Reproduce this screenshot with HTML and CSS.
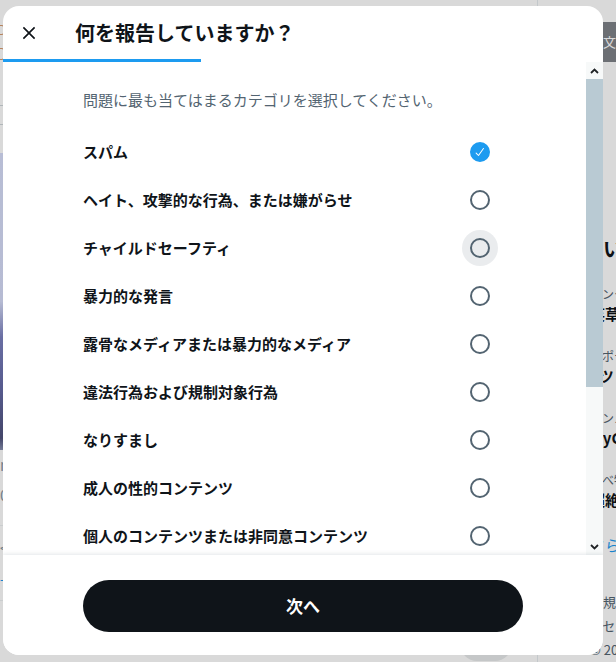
FILE: index.html
```html
<!DOCTYPE html>
<html lang="ja">
<head>
<meta charset="utf-8">
<title>報告</title>
<link rel="stylesheet" href="styles.css">
</head>
<body>
<div class="page">
  <main class="main">
    <div class="m-icon first"></div>
    <div class="m-icon second"></div>
    <div class="m-rule r1"></div>
    <div class="m-rule r2"></div>
    <div class="m-media"></div>
    <div class="m-text t1 muted">m</div>
    <div class="m-text t2 muted">0</div>
    <div class="m-rule r3"></div>
    <div class="m-text t3 muted">&lt;</div>
    <div class="m-text t4 blue">+</div>
    <div class="m-rule r4"></div>
    <div class="m-pill"></div>
  </main>
  <aside class="side">
    <div class="s-tip">の文字</div>
    <div class="s-rule"></div>
    <div class="s-head">いま</div>
    <div class="s-trend first"><div class="s-label">エンタ</div><div class="s-title">笑草弱</div></div>
    <div class="s-trend"><div class="s-label">スポー</div><div class="s-title">#ツ</div></div>
    <div class="s-trend"><div class="s-label">インノ</div><div class="s-title">MyG</div></div>
    <div class="s-trend"><div class="s-label">食べ物</div><div class="s-title">超絶対</div></div>
    <div class="s-more">さら</div>
    <div class="s-rule2"></div>
    <div class="s-foot">
      <div>利用規</div>
      <div>アクセ</div>
      <div class="copy">© 2026</div>
    </div>
  </aside>
</div>
<div class="mask"></div>
<div class="modal" role="dialog" aria-labelledby="report-title">
  <header class="modal-head">
    <button class="close" aria-label="閉じる">
      <svg viewBox="0 0 24 24"><path d="M10.59 12L4.54 5.96l1.42-1.42L12 10.59l6.04-6.05 1.42 1.42L13.41 12l6.05 6.04-1.42 1.42L12 13.41l-6.04 6.05-1.42-1.42L10.59 12z"/></svg>
    </button>
    <h1 class="title" id="report-title">何を報告していますか？</h1>
  </header>
  <div class="progress"><div class="progress-fill" style="width:33%"></div></div>
  <div class="scroll-area">
    <div class="body">
      <p class="lead">問題に最も当てはまるカテゴリを選択してください。</p>
      <ul class="options">
        <li class="option"><span class="label">スパム</span><span class="radio checked"><span class="dot"><svg viewBox="0 0 24 24"><path d="M9 20c-.264 0-.52-.104-.707-.293l-4.785-4.785c-.39-.39-.39-1.023 0-1.414s1.023-.39 1.414 0l3.946 3.945L18.075 4.41c.32-.45.94-.558 1.395-.24.45.318.56.942.24 1.394L9.817 19.577c-.17.24-.438.395-.732.42-.028.002-.057.003-.085.003z"/></svg></span></span></li>
        <li class="option"><span class="label">ヘイト、攻撃的な行為、または嫌がらせ</span><span class="radio"><span class="dot"></span></span></li>
        <li class="option"><span class="label">チャイルドセーフティ</span><span class="radio hover"><span class="dot"></span></span></li>
        <li class="option"><span class="label">暴力的な発言</span><span class="radio"><span class="dot"></span></span></li>
        <li class="option"><span class="label">露骨なメディアまたは暴力的なメディア</span><span class="radio"><span class="dot"></span></span></li>
        <li class="option"><span class="label">違法行為および規制対象行為</span><span class="radio"><span class="dot"></span></span></li>
        <li class="option"><span class="label">なりすまし</span><span class="radio"><span class="dot"></span></span></li>
        <li class="option"><span class="label">成人の性的コンテンツ</span><span class="radio"><span class="dot"></span></span></li>
        <li class="option"><span class="label">個人のコンテンツまたは非同意コンテンツ</span><span class="radio"><span class="dot"></span></span></li>
        <li class="option"><span class="label">自殺または自傷行為</span><span class="radio"><span class="dot"></span></span></li>
        <li class="option"><span class="label">詐欺および不正行為</span><span class="radio"><span class="dot"></span></span></li>
        <li class="option"><span class="label">誤解を招く情報</span><span class="radio"><span class="dot"></span></span></li>
        <li class="option"><span class="label">その他</span><span class="radio"><span class="dot"></span></span></li>
      </ul>
    </div>
    <div class="scrollbar" aria-hidden="true">
      <div class="sb-btn"><svg viewBox="0 0 9 6"><path d="M1 5 4.5 1.5 8 5"/></svg></div>
      <div class="sb-thumb"></div>
      <div class="sb-track"></div>
      <div class="sb-btn"><svg viewBox="0 0 9 6"><path d="M1 1 4.5 4.5 8 1"/></svg></div>
    </div>
  </div>
  <footer class="modal-foot">
    <button class="next">次へ</button>
  </footer>
</div>
</body>
</html>
```

FILE: styles.css
```css
* { box-sizing: border-box; margin: 0; padding: 0; }

html, body { width: 616px; height: 662px; }

body {
  position: relative;
  overflow: hidden;
  background: #fff;
  color: #0f1419;
  font-family: "Noto Sans CJK JP", "Noto Sans", sans-serif;
}

/* ---------- background page ---------- */
.page { display: flex; height: 662px; }

.main {
  width: 538px;
  flex: none;
  border-right: 1px solid #e6ecef;
  display: flex;
  flex-direction: column;
}

.m-icon {
  width: 10px;
  border: 1px solid #d69a6e;
  border-radius: 2px;
  margin-left: -6px;
}
.m-icon.first { margin-top: 25px; height: 10px; }
.m-icon.second { margin-top: 13px; height: 12px; }

.m-rule { height: 1px; background: #cfd6da; }
.m-rule.r1 { margin-top: 45px; }
.m-rule.r2 { margin-top: 18px; }
.m-rule.r3 { margin-top: 20px; background: #eef1f3; }
.m-rule.r4 { margin-top: 10px; background: #eef1f3; }

.m-media {
  margin-top: 28px;
  height: 297px;
  background: linear-gradient(#d9dffb 0%, #d6dcf8 50%, #7c82c0 62%, #656aa6 80%, #50537c 96%, #8890b0 100%);
}

.m-text {
  font-size: 15px;
  line-height: 20px;
}
.m-text.t1 { margin-top: 5px; }
.m-text.t2 { margin-top: 10px; }
.m-text.t3 { margin-top: 12px; }
.m-text.t4 { margin-top: 12px; }
.muted { color: #8a97a3; }
.blue { color: #1d9bf0; }

.m-pill {
  align-self: flex-end;
  margin-right: 25px;
  margin-top: 26px;
  width: 52px;
  height: 34px;
  border-radius: 17px;
  background: #e8eaeb;
}

.side {
  flex: 1;
  min-width: 0;
  padding-left: 52px;
  overflow: hidden;
  white-space: nowrap;
  display: flex;
  flex-direction: column;
}

.s-tip {
  margin-top: 22px;
  height: 40px;
  background: #7f8389;
  color: #fff;
  font-size: 13px;
  line-height: 40px;
}

.s-rule { margin-top: 172px; height: 1px; background: #eff3f4; }

.s-head {
  margin-top: 3px;
  margin-left: 13px;
  font-size: 20px;
  font-weight: 700;
  line-height: 24px;
}

.s-trend { height: 62px; flex: none; }
.s-trend.first { margin-top: 25px; }
.s-label { font-size: 12px; line-height: 16px; color: #536471; }
.s-title { margin-top: 2px; font-size: 15px; line-height: 20px; font-weight: 700; }

.s-more { margin-top: 1px; font-size: 15px; line-height: 20px; color: #1d9bf0; }

.s-rule2 { margin-top: 16px; height: 1px; background: #eff3f4; }

.s-foot {
  margin-top: 19px;
  margin-left: -13px;
  font-size: 13px;
  line-height: 24px;
  color: #536471;
}
.s-foot .copy { margin-left: 13px; }

.mask {
  position: absolute;
  inset: 0;
  background: rgba(0, 0, 0, 0.15);
}

/* ---------- dialog ---------- */
.modal {
  position: absolute;
  left: 3px;
  top: 6px;
  width: 600px;
  height: 649px;
  background: #fff;
  border-radius: 16px;
  overflow: hidden;
  display: flex;
  flex-direction: column;
}

.modal-head {
  flex: none;
  height: 53px;
  display: flex;
  align-items: center;
  padding: 0 8px;
}

.close {
  width: 36px;
  height: 36px;
  border: 0;
  border-radius: 50%;
  background: transparent;
  display: flex;
  align-items: center;
  justify-content: center;
}
.close svg { width: 20px; height: 20px; fill: #0f1419; }

.title {
  margin-left: 28px;
  font-size: 20px;
  line-height: 24px;
  font-weight: 700;
  color: #0f1419;
}

.progress { flex: none; height: 3px; }
.progress-fill { height: 100%; background: #1d9bf0; }

.scroll-area {
  flex: 1;
  min-height: 0;
  display: flex;
}

.body {
  flex: 1;
  min-width: 0;
  overflow-y: auto;
  scrollbar-width: none;
  padding: 28px 88px 44px 80px;
}

.scrollbar {
  flex: none;
  width: 17px;
  display: flex;
  flex-direction: column;
  background: #f7f9f9;
}
.sb-btn {
  height: 17px;
  flex: none;
  display: flex;
  align-items: center;
  justify-content: center;
}
.sb-btn svg {
  width: 9px;
  height: 6px;
  fill: none;
  stroke: #202326;
  stroke-width: 1.8;
}
.sb-thumb { height: 308px; flex: none; background: #b9cad3; }
.sb-track { flex: 1; }

.lead {
  font-size: 15px;
  line-height: 20px;
  color: #536471;
}

.options { list-style: none; margin-top: 18px; }

.option {
  height: 48px;
  display: flex;
  align-items: center;
  justify-content: space-between;
}

.label {
  font-size: 15px;
  line-height: 20px;
  font-weight: 700;
  color: #0f1419;
}

.radio {
  flex: none;
  width: 36px;
  height: 36px;
  border-radius: 50%;
  display: flex;
  align-items: center;
  justify-content: center;
}
.radio.hover { background: #eaecee; }

.dot {
  width: 20px;
  height: 20px;
  border: 2px solid #536471;
  border-radius: 50%;
  display: flex;
  align-items: center;
  justify-content: center;
}
.checked .dot { background: #1d9bf0; border-color: #1d9bf0; }
.dot svg { width: 12px; height: 12px; fill: #fff; }

.modal-foot {
  flex: none;
  height: 100px;
  padding: 25px 80px 23px;
  position: relative;
  background: #fff;
  box-shadow: 0 -1px 4px rgba(101, 119, 134, 0.18);
}

.next {
  width: 100%;
  height: 52px;
  border: 0;
  border-radius: 9999px;
  background: #0f1419;
  color: #fff;
  font-family: "Noto Sans CJK JP", "Noto Sans", sans-serif;
  font-size: 17px;
  font-weight: 700;
  line-height: 20px;
}
```
